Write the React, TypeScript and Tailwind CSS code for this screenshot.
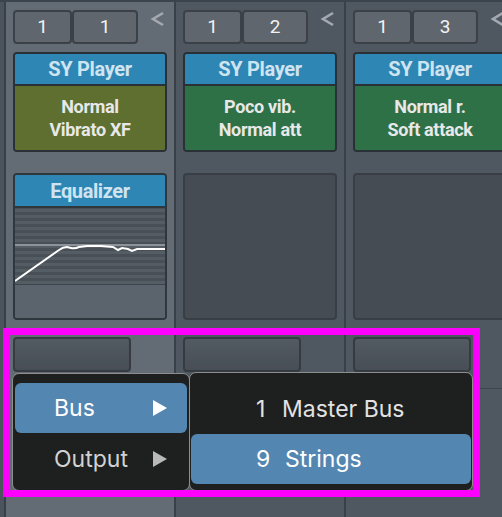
import React from "react";

type StripProps = {
  n: string;
  selected?: boolean;
  lines: [string, string];
  bodyBg: string;
  eq?: boolean;
};

const Chevron = () => (
  <svg width="16" height="16" viewBox="0 0 16 16" className="ml-[12px] mt-[1px]">
    <polyline points="13,2 3,8 13,14" fill="none" stroke="#a3a9af" strokeWidth="2.6" strokeLinejoin="miter" />
  </svg>
);

const EqGraph = () => {
  const stripes = [];
  for (let y = 1; y < 76; y += 6) {
    stripes.push(<rect key={y} x="0" y={y} width="150" height="3" fill="#545c64" />);
  }
  return (
    <svg width="150" height="76" viewBox="0 0 150 76" className="block">
      <rect x="0" y="0" width="150" height="76" fill="#484f57" />
      {stripes}
      <rect x="0" y="36" width="150" height="2" fill="#8d939a" />
      <path
        d="M0 73 L44 42 Q48 39 52 39 L56 40 Q60 41 64 39 L72 38 L86 38 L98 39 L103 42 L107 40 L113 41 L117 43 L122 41 L150 41"
        fill="none"
        stroke="#ffffff"
        strokeWidth="2"
      />
    </svg>
  );
};

const Strip = ({ n, selected, lines, bodyBg, eq }: StripProps) => (
  <div
    className={`relative w-[170px] shrink-0 border-l-2 border-[#394047] px-[7px] pt-[8px] ${
      selected ? "bg-[#636c75]" : "bg-[#4f5860]"
    }`}
  >
    <div className="flex items-start">
      <div className="flex h-[34px] text-[19px] text-[#f2f2f2] font-[family-name:Roboto,sans-serif]">
        <div className="w-[59px] rounded-[4px] border-2 border-[#3b4147] bg-[#5f666d] flex items-center justify-center">1</div>
        <div className="w-[66px] rounded-[4px] border-2 border-[#3b4147] bg-[#5f666d] flex items-center justify-center">{n}</div>
      </div>
      <Chevron />
    </div>

    <div className="mt-[8px] w-[154px] rounded-[4px] border-2 border-[#2a3136] overflow-hidden font-[family-name:Roboto,sans-serif] font-bold tracking-[-0.02em]">
      <div className="h-[32px] border-b-2 border-[#2a3136] bg-[#2e86b4] text-[#cfe4f1] text-[20px] flex items-center justify-center">
        SY Player
      </div>
      <div className={`h-[64px] ${bodyBg} text-[#e8e8e8] text-[18px] leading-[23px] flex flex-col items-center justify-center`}>
        <span>{lines[0]}</span>
        <span>{lines[1]}</span>
      </div>
    </div>

    {eq ? (
      <div className="mt-[21px] w-[154px] h-[147px] rounded-[4px] border-2 border-[#2f363c] overflow-hidden flex flex-col">
        <div className="h-[33px] border-b-2 border-[#2f363c] bg-[#2e86b4] text-[#cfe4f1] text-[20px] font-bold tracking-[-0.02em] flex items-center justify-center font-[family-name:Roboto,sans-serif]">
          Equalizer
        </div>
        <div className="border-b border-[#3d444b]">
          <EqGraph />
        </div>
        <div className="flex-1 bg-[#5b646c]" />
      </div>
    ) : (
      <div className="mt-[21px] w-[154px] h-[147px] rounded-[4px] border-2 border-[#383e44] bg-[#454c53]" />
    )}

    <div className="mt-[17px] w-[118px] h-[35px] rounded-[4px] border-2 border-[#353b40] bg-gradient-to-b from-[#535b62] to-[#474e55]" />
    <div className="mt-[16px] h-[1px] bg-[#3f474e]" />
  </div>
);

const Arrow = ({ color }: { color: string }) => (
  <svg width="14" height="16" viewBox="0 0 14 16">
    <polygon points="0,0 14,8 0,16" fill={color} />
  </svg>
);

export default function App() {
  return (
    <div className="relative w-[502px] h-[517px] overflow-hidden bg-[#4b545c] flex flex-col">
      <div className="h-[2px] bg-[#3c444b]" />
      <div className="flex flex-1">
        <div className="w-[4px] shrink-0 bg-[#4b545c]" />
        <Strip n="1" selected lines={["Normal", "Vibrato XF"]} bodyBg="bg-[#5e6f30]" eq />
        <Strip n="2" lines={["Poco vib.", "Normal att"]} bodyBg="bg-[#2e7146]" />
        <Strip n="3" lines={["Normal r.", "Soft attack"]} bodyBg="bg-[#2e7146]" />
      </div>

      {/* first-level menu */}
      <div className="absolute left-[12px] top-[373px] w-[178px] h-[118px] rounded-[7px] border border-[#8e8e8e] bg-[#1e1f1f] px-[2px] pt-[9px] font-[family-name:Inter,sans-serif] text-[23px]">
        <div className="h-[50px] rounded-[6px] bg-[#5387b1] flex items-center pl-[39px] pr-[20px] text-white">
          <span className="flex-1">Bus</span>
          <Arrow color="#ffffff" />
        </div>
        <div className="h-[52px] flex items-center pl-[39px] pr-[20px] text-[#d2d2d2]">
          <span className="flex-1">Output</span>
          <Arrow color="#b9b9b9" />
        </div>
      </div>

      {/* submenu */}
      <div className="absolute left-[189px] top-[372px] w-[284px] h-[119px] rounded-[7px] border border-[#8e8e8e] bg-[#1e1f1f] px-[1px] pt-[11px] font-[family-name:Inter,sans-serif] text-[23px]">
        <div className="h-[50px] flex items-center pl-[65px] text-[#e2e2e2]">
          <span className="w-[26px]">1</span>
          <span>Master Bus</span>
        </div>
        <div className="h-[50px] rounded-[6px] bg-[#5387b1] flex items-center pl-[65px] text-white">
          <span className="w-[29px]">9</span>
          <span>Strings</span>
        </div>
      </div>

      {/* highlight annotation */}
      <div className="absolute left-[3px] top-[328px] w-[477px] h-[169px] border-[7px] border-[#ff00ff]" />
    </div>
  );
}
